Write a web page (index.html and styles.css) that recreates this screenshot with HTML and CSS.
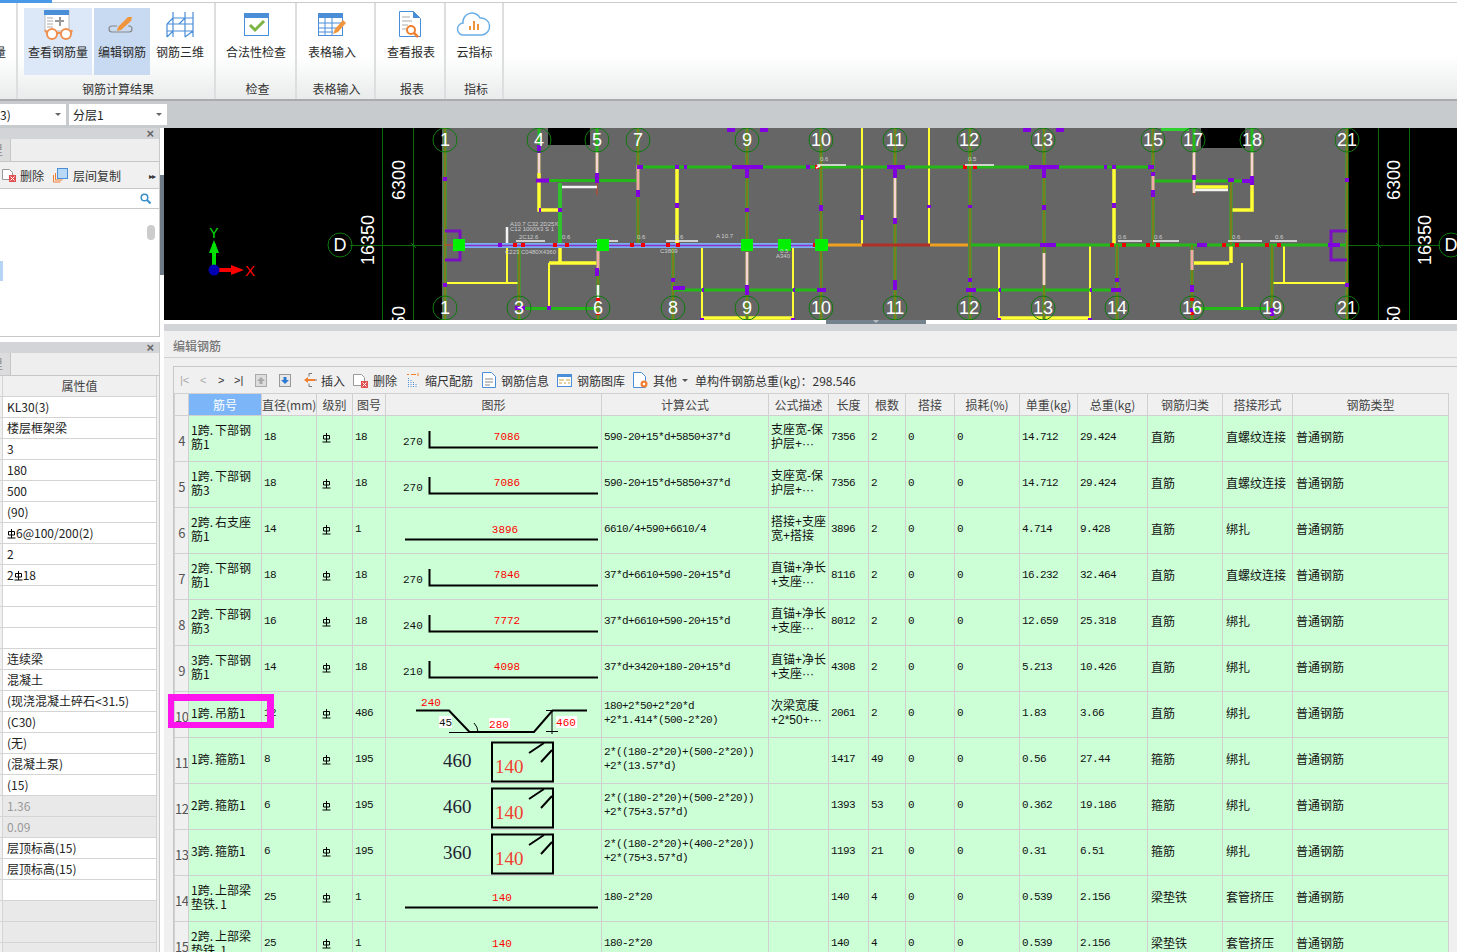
FILE: index.html
```html
<!DOCTYPE html>
<html lang="zh">
<head>
<meta charset="utf-8">
<title>编辑钢筋</title>
<link rel="stylesheet" href="styles.css">
</head>
<body>
<svg class="defs" width="0" height="0"><defs>
<symbol id="gr" viewBox="0 0 9 11"><path d="M1.500 3.500h6v3.500h-6zM4.500 1v9M.5 10h8" fill="none" stroke="#000"/></symbol>
<symbol id="stir" viewBox="0 0 216 46"><rect x="106" y="4.500" width="61" height="39" fill="none" stroke="#000" stroke-width="2"/><path d="M143 15L158 5M155 24L166 12" stroke="#000" stroke-width="2" fill="none"/></symbol>
</defs></svg>
<div class="app">
  <div class="topline"><div class="topline-fill"></div></div>
  <div class="ribbon">
    <div class="group g1"><div class="btns"><div class="btn b-clip"><span class="lbl">量</span></div></div></div>
    <div class="group g2">
      <div class="btns">
        <div class="btn w68 hover1">
          <svg class="ico" width="68" height="33" viewBox="24 8 68 33"><rect x="45" y="11" width="24" height="20" fill="#fff" stroke="#bbb"/><rect x="44" y="10" width="25" height="5" fill="#4a8ed8"/><path d="M47 18h6M47 21h6M47 24h6M47 27h6" stroke="#aaa"/><path d="M55 21h9M60 17v9" stroke="#999" stroke-width="2"/><circle cx="52" cy="34" r="5" fill="#fff" stroke="#f09050" stroke-width="2"/><circle cx="66" cy="34" r="5" fill="#fff" stroke="#f09050" stroke-width="2"/><path d="M57 33h4M47 33l-2-3M71 33l1-3" stroke="#f09050" stroke-width="2" fill="none"/></svg>
          <span class="lbl">查看钢筋量</span>
        </div>
        <div class="btn w56 hover2">
          <svg class="ico" width="56" height="33" viewBox="94 8 56 33"><path d="M117 26h-5a3 3 0 0 0 0 6h17a3 3 0 0 0 0-6h-1" fill="none" stroke="#888" stroke-width="1.200"/><path d="M118 27l10-10 4 0-1 4-10 9-4 1z" fill="#f0953c"/></svg>
          <span class="lbl">编辑钢筋</span>
        </div>
        <div class="btn w60">
          <svg class="ico" width="60" height="33" viewBox="150 8 60 33"><path d="M173 12v25M185 12v25M193 12v25M167 24l6-6h20M167 24v13M167 24h26M167 31h26M173 18l-6 6M185 18l-6 6M167 37l6-6M185 37l8-6" fill="none" stroke="#4a8ed8" stroke-width="1.200"/></svg>
          <span class="lbl">钢筋三维</span>
        </div>
      </div>
      <div class="gname">钢筋计算结果</div>
    </div>
    <div class="group g3">
      <div class="btns"><div class="btn w60">
        <svg class="ico" width="60" height="33" viewBox="226 8 60 33"><rect x="244.500" y="13.500" width="24" height="22" fill="#fff" stroke="#4a8ed8"/><rect x="244" y="13" width="25" height="5" fill="#4a8ed8"/><path d="M250 25l5 5 9-9" fill="none" stroke="#7cb342" stroke-width="3"/></svg>
        <span class="lbl">合法性检查</span>
      </div></div>
      <div class="gname">检查</div>
    </div>
    <div class="group g4">
      <div class="btns"><div class="btn w64">
        <svg class="ico" width="64" height="33" viewBox="300 8 64 33"><rect x="318.500" y="13.500" width="24" height="22" fill="#fff" stroke="#4a8ed8"/><rect x="318" y="13" width="25" height="5" fill="#4a8ed8"/><path d="M319 23h23M319 28h18M319 32h14M325 18v17M332 18v17" stroke="#4a8ed8"/><path d="M333 34l2-5 8-9 3 3-8 9z" fill="#f0953c"/></svg>
        <span class="lbl">表格输入</span>
      </div></div>
      <div class="gname">表格输入</div>
    </div>
    <div class="group g5">
      <div class="btns"><div class="btn w60">
        <svg class="ico" width="60" height="33" viewBox="380 8 60 33"><path d="M398.500 11.500h14l7 7v18h-21z" fill="#fff" stroke="#4a8ed8"/><path d="M412 11v7h7z" fill="#4a8ed8"/><path d="M401 17h8M401 21h10M401 25h6M401 29h5" stroke="#aaa"/><circle cx="410" cy="30" r="4" fill="#fff" stroke="#f08030" stroke-width="2"/><path d="M413 33l4 4" stroke="#f08030" stroke-width="2.500"/></svg>
        <span class="lbl">查看报表</span>
      </div></div>
      <div class="gname">报表</div>
    </div>
    <div class="group g6">
      <div class="btns"><div class="btn w45">
        <svg class="ico" width="45" height="33" viewBox="452 8 45 33"><path d="M465 35h-1a6 6 0 0 1-1-12 9 9 0 0 1 17-5 8 8 0 0 1 2 17z" fill="#fff" stroke="#6aaee8" stroke-width="1.500"/><path d="M470 30v-4M474 30v-9M478 30v-6" stroke="#f0953c" stroke-width="2"/></svg>
        <span class="lbl">云指标</span>
      </div></div>
      <div class="gname">指标</div>
    </div>
  </div>
  <div class="combos">
    <div class="combo c1"><span>3)</span><i class="caret"></i></div>
    <div class="combo c2"><span>分层1</span><i class="caret"></i></div>
  </div>
  <div class="main">
    <div class="left">
      <div class="panel top-panel">
        <div class="ptitle"><span class="close">×</span></div>
        <div class="ptabs"><div class="ptab"><span>里</span></div></div>
        <div class="ltools">
          <svg class="tool-ico lt1" width="16" height="16" viewBox="0 0 16 16"><path d="M1.500 2.500h7l3 3v7h-10z" fill="#fff" stroke="#999"/><rect x="8" y="8" width="7" height="7" fill="#e05050"/><path d="M9.500 9.500l4 4M13.500 9.500l-4 4" stroke="#fff"/></svg>
          <span class="t">删除</span>
          <svg class="tool-ico lt2" width="15" height="15" viewBox="0 0 15 15"><path d="M.5 7v7h7M2.500 5v7h7" fill="none" stroke="#f08030"/><rect x="4.500" y=".5" width="10" height="10" fill="#b8d8f8" stroke="#4a8ed8"/></svg>
          <span class="t">层间复制</span>
          <span class="more">▸▸</span>
        </div>
        <div class="lsearch"><svg width="11" height="11" viewBox="0 0 11 11"><circle cx="4.500" cy="4.500" r="3.300" fill="none" stroke="#3a8fc8" stroke-width="1.500"/><path d="M7 7l3.500 3.500" stroke="#3a8fc8" stroke-width="2"/></svg></div>
        <div class="llist"><div class="thumb"></div><div class="sel"></div></div>
      </div>
      <div class="panel prop-panel">
        <div class="ptitle"><span class="close">×</span></div>
        <div class="ptabs"><div class="ptab"><span>里</span></div></div>
        <div class="prow phead"><span class="pn"></span><span class="pv">属性值</span></div>
        <div class="prow"><span class="pn"></span><span class="pv">KL30(3)</span></div>
        <div class="prow"><span class="pn"></span><span class="pv">楼层框架梁</span></div>
        <div class="prow"><span class="pn"></span><span class="pv">3</span></div>
        <div class="prow"><span class="pn"></span><span class="pv">180</span></div>
        <div class="prow"><span class="pn"></span><span class="pv">500</span></div>
        <div class="prow"><span class="pn"></span><span class="pv">(90)</span></div>
        <div class="prow"><span class="pn"></span><span class="pv"><svg class="gr"><use href="#gr"/></svg>6@100/200(2)</span></div>
        <div class="prow"><span class="pn"></span><span class="pv">2</span></div>
        <div class="prow"><span class="pn"></span><span class="pv">2<svg class="gr"><use href="#gr"/></svg>18</span></div>
        <div class="prow"><span class="pn"></span><span class="pv"></span></div>
        <div class="prow"><span class="pn"></span><span class="pv"></span></div>
        <div class="prow"><span class="pn"></span><span class="pv"></span></div>
        <div class="prow"><span class="pn"></span><span class="pv">连续梁</span></div>
        <div class="prow"><span class="pn"></span><span class="pv">混凝土</span></div>
        <div class="prow"><span class="pn"></span><span class="pv">(现浇混凝土碎石&lt;31.5)</span></div>
        <div class="prow"><span class="pn"></span><span class="pv">(C30)</span></div>
        <div class="prow"><span class="pn"></span><span class="pv">(无)</span></div>
        <div class="prow"><span class="pn"></span><span class="pv">(混凝土泵)</span></div>
        <div class="prow"><span class="pn"></span><span class="pv">(15)</span></div>
        <div class="prow off"><span class="pn"></span><span class="pv">1.36</span></div>
        <div class="prow off"><span class="pn"></span><span class="pv">0.09</span></div>
        <div class="prow"><span class="pn"></span><span class="pv">层顶标高(15)</span></div>
        <div class="prow"><span class="pn"></span><span class="pv">层顶标高(15)</span></div>
        <div class="prow"><span class="pn"></span><span class="pv"></span></div>
        <div class="prow off"><span class="pn"></span><span class="pv"></span></div>
        <div class="prow off"><span class="pn"></span><span class="pv"></span></div>
        <div class="prow off"><span class="pn"></span><span class="pv"></span></div>
      </div>
    </div>
    <div class="vsplit"><div class="vhandle"></div></div>
    <div class="right">
      <svg class="cad" width="1293" height="192" viewBox="164 128 1293 192">
        <rect x="164" y="127" width="1293" height="193" fill="#000"/>
        <rect x="442" y="127" width="905" height="193" fill="#666"/>
        <rect x="548" y="127" width="42" height="18" fill="#000"/>
        <rect x="1201" y="127" width="44" height="21" fill="#000"/>
        <path class="dim" d="M382.500 127V320M413.500 127V320M1378.500 127V320M1409.500 127V320M350 245.500H442M1347 245.500H1440M411 243l5 5M1376 243l5 5"/>
        <g class="yl2">
          <path d="M507 245V283M447 283H519M549 263V308M702 245V320M793 245V320M862 127V245M929 127V245M999 245V320M1090 245V320M1242 263V308M1284 245V283M1272 283H1347"/>
        </g>
        <g class="yl3">
          <path d="M539 173V210H560M549 263H597M677 167V245M702 318H793M999 318H1090M1114 167V245M1194 263H1229M1195 187H1228M1231 210H1252V180M1231 245V263M560 245V262"/>
        </g>
        <g class="bm">
          <path d="M445 127V320M638 127V245M747 127V320M821 127V320M895 127V320M970 127V320M1044 127V320M1153 127V245M1347 127V320M519 245V320M598 245V320M673 245V320M1117 245V320M1192 245V320M1272 245V320M1231 180V245M539 127V173M597 127V180M1194 127V193M1252 127V180"/>
          <path d="M638 167H1153M539 180.500H638M1153 181H1252M519 308.500H598M673 290H822M970 290H1117M1192 308.500H1272M970 245H1347"/>
        </g>
        <path class="rd" d="M445 127V320M638 127V245M747 127V320M821 127V320M895 127V320M970 127V320M1044 127V320M1153 127V245M1347 127V320M519 245V320M598 245V320M673 245V320M1117 245V320M1192 245V320M1272 245V320M1231 180V245M597 180V195M1194 193V195M445 245H460"/>
        <path class="pk" d="M539 152V173M597 152V180M638 165V195M747 252V285M895 175V218M1044 253V285M1153 175V190M1194 152V193M1252 152V180M598 250V270M1192 250V270"/>
        <path class="pk2" d="M539 152V173M597 152V180M747 252V285M895 175V218M1044 253V285M1194 152V193M1252 152V180"/>
        <path class="wh" d="M560 187H597M1195 190H1228M507 227V245M598 285V300"/>
        <path class="gb" d="M560 183V245"/>
        <path class="or" d="M827 245H862M930 245H968"/>
        <path class="drd" d="M862 245H930"/>
        <path class="bl" d="M460 245.500H825"/>
        <path class="pu1" d="M460 245.500H825"/>
        <path class="br" d="M445 231H460V260H445M1347 231H1331V260H1347"/>
        <path class="pu" d="M539 145V153M536 180.500H549M597 173V183M637 167H643M638 190V197M675 167H679M684 167H687M732 167H763M806 167H810M887 167H905M1029 167H1059M1104 167H1107M1112 167H1116M1148 167H1154M747 167V178M1044 167V178M895 167V178M1153 172V176M1153 190V197M1194 175V180M1228 180H1234M1242 181H1252M1252 176V185M445 177V181M445 283V287M498 245H502M597 268V276M515 308H525M539 210H541M558 210H562M747 285V293M821 205V211M895 218V224M895 280V290M677 203V208M747 208V212M970 205V208M1044 205V210M1114 203V208M862 215V220M929 205V208M547 308H551M597 245H609M673 278V282M673 288H685M793 290H795M702 290H704M747 289V295M817 290H826M970 278V282M966 290H976M999 290H1001M1090 290H1092M1117 278V282M1111 290H1121M1040 245H1056M1197 245H1207M1192 285V292M1272 308V316M1192 308V314M1328 245H1340M1347 178V182M1347 283V287M702 318V320M793 318V320M999 318V320M1090 318V320"/>
        <path class="rsq" d="M513 245h4M521 245h4M553 245h4M565 245h4M630 245h4M641 245h4M666 245h4M676 245h4M813 245h4M1110 245h4M1122 245h4M1146 245h4M1156 245h4M1222 245h4M1235 245h4M1265 245h4M1277 245h4M815 167h4M963 167h4M973 167h4M598 298v3M598 312v3M1192 298v3M1192 312v3M1165 129h3M1183 129h3"/>
        <path class="gt" d="M1161 129.500H1189"/>
        <path class="puw" d="M727 130H768M1023 130H1064"/>
        <path class="whl" d="M516 241H545M596 241H618M666 241H698M1118 241H1142M1153 241H1179M1228 241H1262M1270 241H1297M817 165H846M965 165H994M820 166L816 168"/>
        <g class="sq">
          <rect x="453" y="239" width="12" height="12"/><rect x="597" y="239" width="12" height="12"/><rect x="741" y="239" width="12" height="12"/><rect x="778" y="239" width="13" height="12"/><rect x="815" y="239" width="13" height="12"/>
        </g>
        <g class="tiny">
          <text x="510" y="226">A10.7 C32 2D25X</text><text x="510" y="231">C12 1000X3 S 1</text><text x="519" y="239">2C12.6</text><text x="562" y="239">0.6</text><text x="637" y="239">0.6</text><text x="505" y="254">C223 C0480X4360</text><text x="675" y="239">0.6</text><text x="660" y="253">C3809</text><text x="716" y="238">A 10.7</text><text x="780" y="253">0.5</text><text x="776" y="258">A340</text><text x="820" y="161">0.6</text><text x="968" y="161">0.5</text><text x="1118" y="239">0.6</text><text x="1154" y="239">0.6</text><text x="1232" y="239">0.6</text><text x="1275" y="239">0.6</text>
        </g>
        <g class="circ">
          <circle cx="445" cy="140" r="12"/><circle cx="539" cy="140" r="12"/><circle cx="597" cy="140" r="12"/><circle cx="638" cy="140" r="12"/><circle cx="747" cy="140" r="12"/><circle cx="821" cy="140" r="12"/><circle cx="895" cy="140" r="12"/><circle cx="969" cy="140" r="12"/><circle cx="1043" cy="140" r="12"/><circle cx="1153" cy="140" r="12"/><circle cx="1193" cy="140" r="12"/><circle cx="1252" cy="140" r="12"/><circle cx="1347" cy="140" r="12"/>
          <circle cx="445" cy="308" r="12"/><circle cx="519" cy="308" r="12"/><circle cx="598" cy="308" r="12"/><circle cx="673" cy="308" r="12"/><circle cx="747" cy="308" r="12"/><circle cx="821" cy="308" r="12"/><circle cx="895" cy="308" r="12"/><circle cx="969" cy="308" r="12"/><circle cx="1043" cy="308" r="12"/><circle cx="1117" cy="308" r="12"/><circle cx="1192" cy="308" r="12"/><circle cx="1272" cy="308" r="12"/><circle cx="1347" cy="308" r="12"/>
          <circle cx="340" cy="245" r="12"/><circle cx="1451" cy="245" r="12"/>
        </g>
        <g class="axn">
          <text x="445" y="146">1</text><text x="539" y="146">4</text><text x="597" y="146">5</text><text x="638" y="146">7</text><text x="747" y="146">9</text><text x="821" y="146">10</text><text x="895" y="146">11</text><text x="969" y="146">12</text><text x="1043" y="146">13</text><text x="1153" y="146">15</text><text x="1193" y="146">17</text><text x="1252" y="146">18</text><text x="1347" y="146">21</text>
          <text x="445" y="314">1</text><text x="519" y="314">3</text><text x="598" y="314">6</text><text x="673" y="314">8</text><text x="747" y="314">9</text><text x="821" y="314">10</text><text x="895" y="314">11</text><text x="969" y="314">12</text><text x="1043" y="314">13</text><text x="1117" y="314">14</text><text x="1192" y="314">16</text><text x="1272" y="314">19</text><text x="1347" y="314">21</text>
          <text x="340" y="251">D</text><text x="1451" y="251">D</text>
        </g>
        <g class="dimt">
          <text transform="translate(405 200) rotate(-90)">6300</text><text transform="translate(374 265) rotate(-90)">16350</text><text transform="translate(1400 200) rotate(-90)">6300</text><text transform="translate(1431 265) rotate(-90)">16350</text><text class="endt" transform="translate(405 306) rotate(-90)">16350</text><text class="endt" transform="translate(1400 306) rotate(-90)">16350</text>
        </g>
        <path d="M214 268V244" stroke="#00e000" stroke-width="4"/><path d="M214 240l-5 13h10z" fill="#00e000"/>
        <path d="M214 270H236" stroke="#f00" stroke-width="4"/><path d="M244 270l-13-5v10z" fill="#f00"/>
        <circle cx="214" cy="270" r="5.500" fill="#0000b0"/>
        <text class="ax-y" x="214" y="238">Y</text><text class="ax-x" x="245" y="276">X</text>
      </svg>
      <div class="hsplit"><div class="hhandle"><i></i></div></div>
      <div class="rebar">
        <div class="rtitle">编辑钢筋</div>
        <div class="inner">
          <div class="tbar">
            <span class="nav n1">|&lt;</span><span class="nav n2">&lt;</span><span class="nav n3">&gt;</span><span class="nav n4">&gt;|</span>
            <svg class="ti i-up" width="12" height="13" viewBox="0 0 12 13"><rect x=".5" y=".5" width="11" height="12" fill="#ddd" stroke="#aaa"/><path d="M6 3L2 7h2.500v3h3V7H10z" fill="#aaa"/></svg>
            <svg class="ti i-dn" width="12" height="13" viewBox="0 0 12 13"><rect x=".5" y=".5" width="11" height="12" fill="#e8e8e8" stroke="#999"/><path d="M6 10L2 6h2.500V3h3v3H10z" fill="#2a78d0"/></svg>
            <svg class="ti m4" width="14" height="16" viewBox="0 0 14 16"><path d="M6 1.500h3M6 14.500h3M6 1.500v3M6 11.500v3M9 8H14" fill="none" stroke="#777"/><path d="M1 8l4-3v2h7v2H5v2z" fill="#f08030"/></svg><span class="t g8">插入</span>
            <svg class="ti m5" width="15" height="16" viewBox="0 0 15 16"><path d="M.5 2.500h8l3 3v8H.5z" fill="#fff" stroke="#999"/><rect x="8" y="9" width="7" height="7" fill="#e05050"/><path d="M9.500 10.500l4 4M13.500 10.500l-4 4" stroke="#fff"/></svg><span class="t g10">删除</span>
            <svg class="ti m6" width="12" height="16" viewBox="0 0 12 16"><path d="M0 2.500h2M4 2.500h5M11 1v3" stroke="#f08030" fill="none"/><path d="M1.500 6v9M4 8v7M6.500 10v5M9 12v3" stroke="#4a8ed8" stroke-dasharray="1 1" fill="none"/></svg><span class="t g9">缩尺配筋</span>
            <svg class="ti m5" width="14" height="16" viewBox="0 0 14 16"><path d="M.5.5h9l4 4v11H.500z" fill="#fff" stroke="#4a8ed8"/><path d="M3 7h8M3 10h8M3 13h5" stroke="#888"/></svg><span class="t g8">钢筋信息</span>
            <svg class="ti m5" width="15" height="13" viewBox="0 0 15 13"><rect x=".5" y=".5" width="14" height="12" fill="#fff" stroke="#4a8ed8"/><rect width="15" height="3" fill="#4a8ed8"/><path d="M2 6h5M9 6h4M2 9h3M7 9h2M11 9h2" stroke="#c9a040"/></svg><span class="t g8">钢筋图库</span>
            <svg class="ti m4" width="16" height="17" viewBox="0 0 16 17"><path d="M.5.5h8l4 4v11H.500z" fill="#fff" stroke="#4a8ed8"/><circle cx="11" cy="12" r="3.500" fill="#f08030"/><circle cx="11" cy="12" r="1.300" fill="#fff"/></svg><span class="t">其他</span>
            <i class="caret small"></i>
            <span class="total">单构件钢筋总重(kg)：298.546</span>
          </div>
          <div class="tablewrap">
            <table class="grid">
              <colgroup><col class="c-a"><col class="c-b"><col class="c-c"><col class="c-d"><col class="c-e"><col class="c-f"><col class="c-g"><col class="c-h"><col class="c-i"><col class="c-j"><col class="c-k"><col class="c-l"><col class="c-m"><col class="c-n"><col class="c-o"><col class="c-p"><col class="c-q"></colgroup>
              <thead><tr><th></th><th class="on">筋号</th><th>直径(mm)</th><th>级别</th><th>图号</th><th>图形</th><th>计算公式</th><th>公式描述</th><th>长度</th><th>根数</th><th>搭接</th><th>损耗(%)</th><th>单重(kg)</th><th>总重(kg)</th><th>钢筋归类</th><th>搭接形式</th><th>钢筋类型</th></tr></thead>
              <tbody>
                <tr><th>4</th><td>1跨<span class="dot">.</span>下部钢<br>筋1</td><td class="n">18</td><td class="g"><svg class="gr"><use href="#gr"/></svg></td><td class="n">18</td><td class="fig"><svg width="216" height="46" viewBox="0 0 216 46"><text class="k" x="17" y="29">270</text><path class="ln" d="M43.500 15V31.500H212"/><text class="r" x="121" y="24">7086</text></svg></td><td class="n">590-20+15*d+5850+37*d</td><td class="d">支座宽-保<br>护层+···</td><td class="n">7356</td><td class="n">2</td><td class="n">0</td><td class="n">0</td><td class="n">14.712</td><td class="n">29.424</td><td>直筋</td><td>直螺纹连接</td><td>普通钢筋</td></tr>
                <tr><th>5</th><td>1跨<span class="dot">.</span>下部钢<br>筋3</td><td class="n">18</td><td class="g"><svg class="gr"><use href="#gr"/></svg></td><td class="n">18</td><td class="fig"><svg width="216" height="46" viewBox="0 0 216 46"><text class="k" x="17" y="29">270</text><path class="ln" d="M43.500 15V31.500H212"/><text class="r" x="121" y="24">7086</text></svg></td><td class="n">590-20+15*d+5850+37*d</td><td class="d">支座宽-保<br>护层+···</td><td class="n">7356</td><td class="n">2</td><td class="n">0</td><td class="n">0</td><td class="n">14.712</td><td class="n">29.424</td><td>直筋</td><td>直螺纹连接</td><td>普通钢筋</td></tr>
                <tr><th>6</th><td>2跨<span class="dot">.</span>右支座<br>筋1</td><td class="n">14</td><td class="g"><svg class="gr"><use href="#gr"/></svg></td><td class="n">1</td><td class="fig"><svg width="216" height="46" viewBox="0 0 216 46"><path class="ln" d="M19 31.500H212"/><text class="r" x="119" y="25">3896</text></svg></td><td class="n">6610/4+590+6610/4</td><td class="d">搭接+支座<br>宽+搭接</td><td class="n">3896</td><td class="n">2</td><td class="n">0</td><td class="n">0</td><td class="n">4.714</td><td class="n">9.428</td><td>直筋</td><td>绑扎</td><td>普通钢筋</td></tr>
                <tr><th>7</th><td>2跨<span class="dot">.</span>下部钢<br>筋1</td><td class="n">18</td><td class="g"><svg class="gr"><use href="#gr"/></svg></td><td class="n">18</td><td class="fig"><svg width="216" height="46" viewBox="0 0 216 46"><text class="k" x="17" y="29">270</text><path class="ln" d="M43.500 15V31.500H212"/><text class="r" x="121" y="24">7846</text></svg></td><td class="n">37*d+6610+590-20+15*d</td><td class="d">直锚+净长<br>+支座···</td><td class="n">8116</td><td class="n">2</td><td class="n">0</td><td class="n">0</td><td class="n">16.232</td><td class="n">32.464</td><td>直筋</td><td>直螺纹连接</td><td>普通钢筋</td></tr>
                <tr><th>8</th><td>2跨<span class="dot">.</span>下部钢<br>筋3</td><td class="n">16</td><td class="g"><svg class="gr"><use href="#gr"/></svg></td><td class="n">18</td><td class="fig"><svg width="216" height="46" viewBox="0 0 216 46"><text class="k" x="17" y="29">240</text><path class="ln" d="M43.500 15V31.500H212"/><text class="r" x="121" y="24">7772</text></svg></td><td class="n">37*d+6610+590-20+15*d</td><td class="d">直锚+净长<br>+支座···</td><td class="n">8012</td><td class="n">2</td><td class="n">0</td><td class="n">0</td><td class="n">12.659</td><td class="n">25.318</td><td>直筋</td><td>绑扎</td><td>普通钢筋</td></tr>
                <tr><th>9</th><td>3跨<span class="dot">.</span>下部钢<br>筋1</td><td class="n">14</td><td class="g"><svg class="gr"><use href="#gr"/></svg></td><td class="n">18</td><td class="fig"><svg width="216" height="46" viewBox="0 0 216 46"><text class="k" x="17" y="29">210</text><path class="ln" d="M43.500 15V31.500H212"/><text class="r" x="121" y="24">4098</text></svg></td><td class="n">37*d+3420+180-20+15*d</td><td class="d">直锚+净长<br>+支座···</td><td class="n">4308</td><td class="n">2</td><td class="n">0</td><td class="n">0</td><td class="n">5.213</td><td class="n">10.426</td><td>直筋</td><td>绑扎</td><td>普通钢筋</td></tr>
                <tr><th>10</th><td>1跨<span class="dot">.</span>吊筋1</td><td class="n">12</td><td class="g"><svg class="gr"><use href="#gr"/></svg></td><td class="n">486</td><td class="fig"><svg width="216" height="46" viewBox="0 0 216 46"><path class="thin" d="M63 40.500H106M166 18V42M160 18.500H172M160 39.500H172M92 40a14 14 0 0 0-4-9"/><path class="ln" d="M30 18.500H63L83.500 40H148L166.500 18.500H201"/><rect class="wb" x="53" y="24" width="13" height="12"/><rect class="wb" x="103" y="26" width="21" height="11"/><rect class="wb" x="170" y="24" width="21" height="12"/><text class="r" x="45" y="14">240</text><text class="k sm" x="59.500" y="34">45</text><text class="r" x="113" y="36">280</text><text class="r" x="180" y="34">460</text></svg></td><td class="n">180+2*50+2*20*d<br>+2*1.414*(500-2*20)</td><td class="d">次梁宽度<br>+2*50+···</td><td class="n">2061</td><td class="n">2</td><td class="n">0</td><td class="n">0</td><td class="n">1.83</td><td class="n">3.66</td><td>直筋</td><td>绑扎</td><td>普通钢筋</td></tr>
                <tr><th>11</th><td>1跨<span class="dot">.</span>箍筋1</td><td class="n">8</td><td class="g"><svg class="gr"><use href="#gr"/></svg></td><td class="n">195</td><td class="fig"><svg width="216" height="46" viewBox="0 0 216 46"><use href="#stir" width="216" height="46"/><text class="sf" x="57" y="29">460</text><text class="sf red" x="109" y="35">140</text></svg></td><td class="n">2*((180-2*20)+(500-2*20))<br>+2*(13.57*d)</td><td></td><td class="n">1417</td><td class="n">49</td><td class="n">0</td><td class="n">0</td><td class="n">0.56</td><td class="n">27.44</td><td>箍筋</td><td>绑扎</td><td>普通钢筋</td></tr>
                <tr><th>12</th><td>2跨<span class="dot">.</span>箍筋1</td><td class="n">6</td><td class="g"><svg class="gr"><use href="#gr"/></svg></td><td class="n">195</td><td class="fig"><svg width="216" height="46" viewBox="0 0 216 46"><use href="#stir" width="216" height="46"/><text class="sf" x="57" y="29">460</text><text class="sf red" x="109" y="35">140</text></svg></td><td class="n">2*((180-2*20)+(500-2*20))<br>+2*(75+3.57*d)</td><td></td><td class="n">1393</td><td class="n">53</td><td class="n">0</td><td class="n">0</td><td class="n">0.362</td><td class="n">19.186</td><td>箍筋</td><td>绑扎</td><td>普通钢筋</td></tr>
                <tr><th>13</th><td>3跨<span class="dot">.</span>箍筋1</td><td class="n">6</td><td class="g"><svg class="gr"><use href="#gr"/></svg></td><td class="n">195</td><td class="fig"><svg width="216" height="46" viewBox="0 0 216 46"><use href="#stir" width="216" height="46"/><text class="sf" x="57" y="29">360</text><text class="sf red" x="109" y="35">140</text></svg></td><td class="n">2*((180-2*20)+(400-2*20))<br>+2*(75+3.57*d)</td><td></td><td class="n">1193</td><td class="n">21</td><td class="n">0</td><td class="n">0</td><td class="n">0.31</td><td class="n">6.51</td><td>箍筋</td><td>绑扎</td><td>普通钢筋</td></tr>
                <tr><th>14</th><td>1跨<span class="dot">.</span>上部梁<br>垫铁<span class="dot">.</span>1</td><td class="n">25</td><td class="g"><svg class="gr"><use href="#gr"/></svg></td><td class="n">1</td><td class="fig"><svg width="216" height="46" viewBox="0 0 216 46"><path class="ln" d="M19 31.500H212"/><text class="r" x="116" y="25">140</text></svg></td><td class="n">180-2*20</td><td></td><td class="n">140</td><td class="n">4</td><td class="n">0</td><td class="n">0</td><td class="n">0.539</td><td class="n">2.156</td><td>梁垫铁</td><td>套管挤压</td><td>普通钢筋</td></tr>
                <tr><th>15</th><td>2跨<span class="dot">.</span>上部梁<br>垫铁<span class="dot">.</span>1</td><td class="n">25</td><td class="g"><svg class="gr"><use href="#gr"/></svg></td><td class="n">1</td><td class="fig"><svg width="216" height="46" viewBox="0 0 216 46"><path class="ln" d="M19 31.500H212"/><text class="r" x="116" y="25">140</text></svg></td><td class="n">180-2*20</td><td></td><td class="n">140</td><td class="n">4</td><td class="n">0</td><td class="n">0</td><td class="n">0.539</td><td class="n">2.156</td><td>梁垫铁</td><td>套管挤压</td><td>普通钢筋</td></tr>
              </tbody>
            </table>
            <div class="mark"></div>
          </div>
        </div>
      </div>
    </div>
  </div>
</div>
</body>
</html>
```

FILE: styles.css
```css
* { box-sizing: border-box; }
html, body { margin: 0; padding: 0; background: #fff; }
body { font-family: "Noto Sans CJK SC", "Liberation Sans", sans-serif; font-size: 12px; color: #222; }
.defs { position: absolute; }
.app { width: 1457px; height: 952px; overflow: hidden; display: flex; flex-direction: column; }

.topline { height: 3px; background: linear-gradient(#fff 0 2px, #ccc 2px 3px); flex: none; }
.topline-fill { width: 52px; height: 3px; background: #4a98e8; }

.ribbon { height: 98px; flex: none; display: flex; background: linear-gradient(#fff 0, #fff 55%, #e9ecec 100%); border-bottom: 2px solid #a9abad; }
.group { display: flex; flex-direction: column; border-right: 2px solid #dcdedf; position: relative; }
.g1 { width: 18px; overflow: hidden; }
.g2 { width: 198px; padding-left: 6px; }
.g3 { width: 81px; padding-left: 10px; }
.g4 { width: 79px; padding-left: 3px; }
.g5 { width: 70px; padding-left: 5px; }
.g6 { width: 58px; padding-left: 6px; }
.btns { display: flex; margin-top: 5px; height: 67px; }
.btn { display: flex; flex-direction: column; align-items: center; height: 67px; flex: none; }
.w68 { width: 68px; margin-right: 2px; }
.w56 { width: 56px; }
.w60 { width: 60px; }
.w64 { width: 64px; }
.w45 { width: 45px; }
.hover1 { background: #dce8f8; }
.hover2 { background: #c8daf2; }
.b-clip { width: 12px; align-items: flex-end; margin-left: -6px; padding-top: 33px; direction: rtl; }
.ico { display: block; flex: none; }
.lbl { line-height: 18px; margin-top: 2px; white-space: nowrap; font-size: 12px; color: #2a2a2a; }
.gname { position: absolute; left: 0; right: 0; top: 77px; text-align: center; line-height: 18px; color: #333; padding-left: 4px; }
.g4 .gname { padding-left: 2px; }

.combos { height: 27px; flex: none; background: #c8cbcd; display: flex; padding: 3px 0 3px; gap: 3px; }
.combo { height: 21px; background: #fff; display: flex; align-items: center; justify-content: space-between; padding: 0 5px 0 4px; }
.c1 { width: 66px; padding-left: 0; }
.c2 { width: 98px; }
.caret { width: 0; height: 0; border-left: 3px solid transparent; border-right: 3px solid transparent; border-top: 3px solid #666; }
.caret.small { border-top-color: #555; margin: 0 7px 0 5px; }

.main { flex: 1; display: flex; min-height: 0; }
.left { width: 160px; flex: none; display: flex; flex-direction: column; background: #fff; }
.panel { border-right: 1px solid #c8c8c8; background: #f0f0f0; }
.top-panel { height: 209px; flex: none; border-bottom: 1px solid #c8c8c8; display: flex; flex-direction: column; }
.prop-panel { flex: 1; margin-top: 5px; overflow: hidden; }
.ptitle { height: 11px; background: #d2d4d8; display: flex; justify-content: flex-end; align-items: center; padding-right: 5px; }
.close { font-size: 13px; line-height: 11px; color: #666; font-family: "Liberation Sans", sans-serif; font-weight: bold; }
.ptabs { height: 23px; border-bottom: 1px solid #c4c6c8; background: #eee; }
.ptab { width: 11px; height: 22px; background: #dcdcdc; border-right: 1px solid #c4c6c8; overflow: hidden; direction: rtl; line-height: 22px; }
.ptab span { display: inline-block; margin-right: 7px; color: #888; }
.ltools { height: 27px; display: flex; align-items: center; border-bottom: 1px solid #c8c8c8; background: #f0f0f0; padding-left: 1px; flex: none; }
.lt1 { margin-right: 3px; }
.lt2 { margin: 0 5px 0 9px; }
.t { white-space: nowrap; color: #333; }
.more { margin-left: 28px; font-size: 8px; letter-spacing: -1px; color: #333; }
.lsearch { height: 20px; background: #fff; border-bottom: 1px solid #c8c8c8; display: flex; justify-content: flex-end; align-items: center; padding-right: 8px; flex: none; }
.llist { flex: 1; background: #fff; position: relative; }
.thumb { position: absolute; right: 4px; top: 16px; width: 8px; height: 15px; border-radius: 4px; background: #ccc; }
.sel { position: absolute; left: 0; top: 52px; width: 3px; height: 20px; background: #b8d4f4; }

.prow { height: 21px; display: flex; border-bottom: 1px solid #d4d4d4; background: #fff; margin-right: 2px; line-height: 20px; }
.pn { width: 3px; flex: none; border-right: 1px solid #d4d4d4; background: #f0f0f0; }
.pv { flex: 1; padding-left: 4px; white-space: nowrap; overflow: hidden; border-right: 1px solid #d4d4d4; }
.phead { background: #f0f0f0; }
.phead .pv { text-align: center; color: #444; padding: 0; }
.off { background: #e9e9e9; color: #999; }
.gr { width: 9px; height: 11px; display: inline-block; vertical-align: -1px; }

.vsplit { width: 4px; flex: none; background: #fff; padding-top: 47px; }
.vhandle { height: 100px; background: #6e7a85; }

.right { flex: 1; min-width: 0; display: flex; flex-direction: column; overflow: hidden; }
.cad { display: block; flex: none; }
.dim { stroke: #0a6a0a; fill: none; }
.rd, .pk, .pk2, .wh, .gb, .or, .drd, .bl, .pu1, .br, .pu, .rsq, .gt, .puw, .whl { fill: none; }
.yl2 path { stroke: #ffff33; stroke-width: 2; fill: none; }
.yl3 path { stroke: #ffff33; stroke-width: 3.5; fill: none; }
.bm path { stroke: #24b818; stroke-width: 3; fill: none; }
.rd { stroke: #d84020; stroke-width: 1; }
.pk { stroke: #f4a8a8; stroke-width: 3; }
.pk2 { stroke: #fff; stroke-width: 1; }
.wh { stroke: #f4f4f4; stroke-width: 2.500; }
.gb { stroke: #30c030; stroke-width: 4; }
.or { stroke: #f0a020; stroke-width: 3; }
.drd { stroke: #b03028; stroke-width: 3; }
.bl { stroke: #78aef0; stroke-width: 5; }
.pu1 { stroke: #8a30c8; stroke-width: 1.500; }
.br { stroke: #7a10c0; stroke-width: 3; }
.pu { stroke: #8000e0; stroke-width: 4; }
.rsq { stroke: #f00000; stroke-width: 4; }
.gt { stroke: #30d030; stroke-width: 3; }
.puw { stroke: #8000e0; stroke-width: 4; stroke-dasharray: 8 25; }
.whl { stroke: #f4f4f4; stroke-width: 1.500; }
.sq rect { fill: #00f000; }
.tiny text { font-family: "Liberation Sans", sans-serif; font-size: 6px; fill: #cfcfcf; }
.circ circle { fill: none; stroke: #0d7a0d; stroke-width: 1; }
.axn text { font-family: "Liberation Sans", sans-serif; font-size: 18px; fill: #fff; text-anchor: middle; }
.dimt text { font-family: "Liberation Sans", sans-serif; font-size: 18px; fill: #fff; }
.dimt .endt { text-anchor: end; }
.ax-y { font-family: "Liberation Sans", sans-serif; font-size: 14px; fill: #00e000; text-anchor: middle; }
.ax-x { font-family: "Liberation Sans", sans-serif; font-size: 15px; fill: #f00; }

.hsplit { height: 5px; flex: none; background: linear-gradient(#fff 0 4px, #d2d4d8 4px); padding-left: 662px; }
.hhandle { width: 100px; height: 4px; background: #74828e; display: flex; justify-content: center; }
.hhandle i { width: 0; height: 0; border-left: 3px solid transparent; border-right: 3px solid transparent; border-top: 3px solid #b5bcc2; }

.rebar { flex: 1; min-height: 0; background: #f0f0f0; display: flex; flex-direction: column; }
.rtitle { flex: none; padding-left: 9px; border-top: 6px solid #d2d4d8; height: 33px; line-height: 29px; border-bottom: 1px solid #d0d0d0; color: #777; font-weight: 500; }
.inner { flex: 1; min-height: 0; margin: 8px 0 0 9px; border-top: 1px solid #c8c8c8; border-left: 1px solid #c8c8c8; display: flex; flex-direction: column; }
.tbar { height: 26px; flex: none; display: flex; align-items: center; padding-left: 6px; color: #333; }
.nav { font-size: 11px; color: #aaa; font-family: "Liberation Sans", sans-serif; white-space: nowrap; }
.n1 { width: 20px; }
.n2 { width: 18px; }
.n3 { width: 16px; color: #333; }
.n4 { width: 11px; color: #333; }
.ti { flex: none; }
.i-up { margin: 0 12px 0 10px; }
.i-dn { margin-right: 12px; }
.m4 { margin-right: 4px; }
.m5 { margin-right: 5px; }
.m6 { margin-right: 6px; }
.g8 { margin-right: 8px; }
.g9 { margin-right: 9px; }
.g10 { margin-right: 10px; }
.total { white-space: nowrap; }

.tablewrap { position: relative; flex: 1; min-height: 0; }
.grid { border-collapse: collapse; table-layout: fixed; width: 1274px; }
.c-a { width: 14px; } .c-b { width: 73px; } .c-c { width: 55px; } .c-d { width: 36px; } .c-e { width: 33px; } .c-f { width: 216px; } .c-g { width: 167px; } .c-h { width: 60px; } .c-i { width: 40px; } .c-j { width: 37px; } .c-k { width: 49px; } .c-l { width: 65px; } .c-m { width: 58px; } .c-n { width: 70px; } .c-o { width: 75px; } .c-p { width: 70px; } .c-q { width: 156px; }
.grid th, .grid td { border: 1px solid #cfd0cf; padding: 0; overflow: hidden; }
.grid thead th { height: 22px; background: #f0f0f0; font-weight: 400; color: #444; white-space: nowrap; text-align: center; line-height: 20px; }
.grid thead th.on { background: #7db6f8; color: #fff; }
.grid tbody tr { height: 46px; }
.grid tbody th { background: #f0f0f0; font-weight: 400; font-size: 13px; color: #555; text-align: center; white-space: nowrap; padding-top: 3px; letter-spacing: -.5px; }
.grid td { background: #ccffd6; padding: 0 0 4px 3px; line-height: 14px; color: #111; vertical-align: middle; white-space: nowrap; }
.grid tbody td:first-of-type { padding-left: 2px; }
.dot { margin-right: 2px; }
.grid td.n { font-family: "Liberation Mono", monospace; font-size: 11px; letter-spacing: -.6px; padding-left: 2px; }
.grid td.d { font-family: "Liberation Sans", "Noto Sans CJK SC", sans-serif; padding-left: 2px; }
.grid td.g { padding-left: 5px; }
.grid td.fig { padding: 0; }
.fig svg { display: block; margin-bottom: -1px; }
.fig text { font-family: "Liberation Mono", monospace; font-size: 11px; }
.fig .r { fill: #f00; text-anchor: middle; }
.fig .k { fill: #111; }
.fig .sm { text-anchor: middle; }
.fig .ln { fill: none; stroke: #000; stroke-width: 2; }
.fig .thin { fill: none; stroke: #000; stroke-width: 1; }
.fig .wb { fill: #fff; }
.fig .sf { font-family: "Liberation Serif", serif; font-size: 19px; fill: #223; }
.fig .sf.red { fill: #f04030; }
.mark { position: absolute; left: -6px; top: 301px; width: 106px; height: 34px; border: solid #ff14ee; border-width: 7px 7px 6px 6px; }
```
